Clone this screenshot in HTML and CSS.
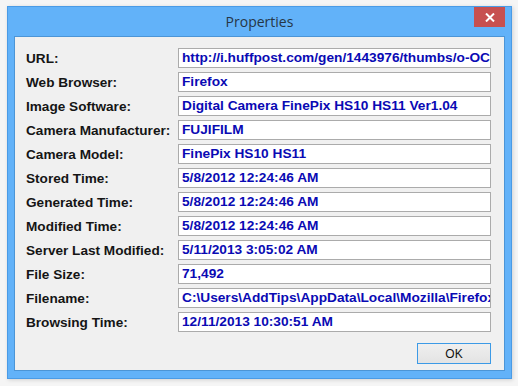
FILE: index.html
```html
<!DOCTYPE html>
<html>
<head>
<meta charset="utf-8">
<link rel="stylesheet" href="styles.css">
</head>
<body>
<div class="window">
  <div class="titlebar">
    <span class="title">Properties</span>
    <button class="close" aria-label="Close">
      <svg width="10" height="9" viewBox="0 0 10 9"><path d="M1 0.5 L9 8.5 M9 0.5 L1 8.5" stroke="#fff" stroke-width="2" fill="none"/></svg>
    </button>
  </div>
  <div class="client">
    <div class="props">
      <div class="label">URL:</div><div class="field">http://i.huffpost.com/gen/1443976/thumbs/o-OCEAN-570.jpg</div>
      <div class="label">Web Browser:</div><div class="field">Firefox</div>
      <div class="label">Image Software:</div><div class="field">Digital Camera FinePix HS10 HS11 Ver1.04</div>
      <div class="label">Camera Manufacturer:</div><div class="field">FUJIFILM</div>
      <div class="label">Camera Model:</div><div class="field">FinePix HS10 HS11</div>
      <div class="label">Stored Time:</div><div class="field">5/8/2012 12:24:46 AM</div>
      <div class="label">Generated Time:</div><div class="field">5/8/2012 12:24:46 AM</div>
      <div class="label">Modified Time:</div><div class="field">5/8/2012 12:24:46 AM</div>
      <div class="label">Server Last Modified:</div><div class="field">5/11/2013 3:05:02 AM</div>
      <div class="label">File Size:</div><div class="field">71,492</div>
      <div class="label">Filename:</div><div class="field">C:\Users\AddTips\AppData\Local\Mozilla\Firefox\Profiles\cache2</div>
      <div class="label">Browsing Time:</div><div class="field">12/11/2013 10:30:51 AM</div>
    </div>
    <div class="actions">
      <button class="ok">OK</button>
    </div>
  </div>
</div>
</body>
</html>
```
FILE: styles.css
```css
html, body {
  margin: 0;
  padding: 0;
}
body {
  background: #f5f5f5;
  width: 518px;
  height: 386px;
  overflow: hidden;
}
.window {
  box-sizing: border-box;
  margin: 6px 0 0 7px;
  width: 505px;
  height: 373px;
  border: 1px solid #4a9be6;
  background: #62b2f9;
  padding: 0 6px 7px 6px;
  box-shadow: 1px 1px 4px rgba(0,0,0,0.15);
  display: flex;
  flex-direction: column;
}
.titlebar {
  height: 29px;
  flex: none;
  display: flex;
  justify-content: center;
  position: relative;
}
.title {
  font-family: "Open Sans", "Noto Sans", sans-serif;
  font-size: 14px;
  color: #263646;
  line-height: 29px;
  padding-top: 0;
}
.close {
  position: absolute;
  right: 0;
  top: 0;
  width: 31px;
  height: 20px;
  border: 0;
  padding: 0;
  margin: 0;
  background: #c75050;
  display: flex;
  align-items: center;
  justify-content: center;
}
.close svg { display: block; }
.client {
  box-sizing: border-box;
  flex: 1;
  background: #f0f0f0;
  border: 1px solid #4c95d6;
  padding: 11px 13px 0 11px;
}
.props {
  display: grid;
  grid-template-columns: 152px 313px;
  grid-auto-rows: 20px;
  row-gap: 4px;
  align-items: center;
}
.label {
  font-family: "Liberation Sans", Arial, sans-serif;
  font-weight: bold;
  font-size: 13.6px;
  color: #151515;
  white-space: nowrap;
}
.field {
  box-sizing: border-box;
  height: 20px;
  border: 1px solid #ababab;
  background: #fff;
  padding: 0 3px;
  font-family: "Liberation Sans", Arial, sans-serif;
  font-weight: bold;
  font-size: 13.7px;
  line-height: 18px;
  color: #0a0ab4;
  white-space: nowrap;
  overflow: hidden;
}
.actions {
  display: flex;
  justify-content: flex-end;
  padding-top: 11px;
  padding-right: 0;
}
.ok {
  box-sizing: border-box;
  width: 74px;
  height: 21px;
  border: 1px solid #3c9ae6;
  background: linear-gradient(#efefef, #e3e3e3);
  font-family: "Liberation Sans", Arial, sans-serif;
  font-size: 12px;
  color: #111;
  padding: 0;
  margin: 0;
}
```
